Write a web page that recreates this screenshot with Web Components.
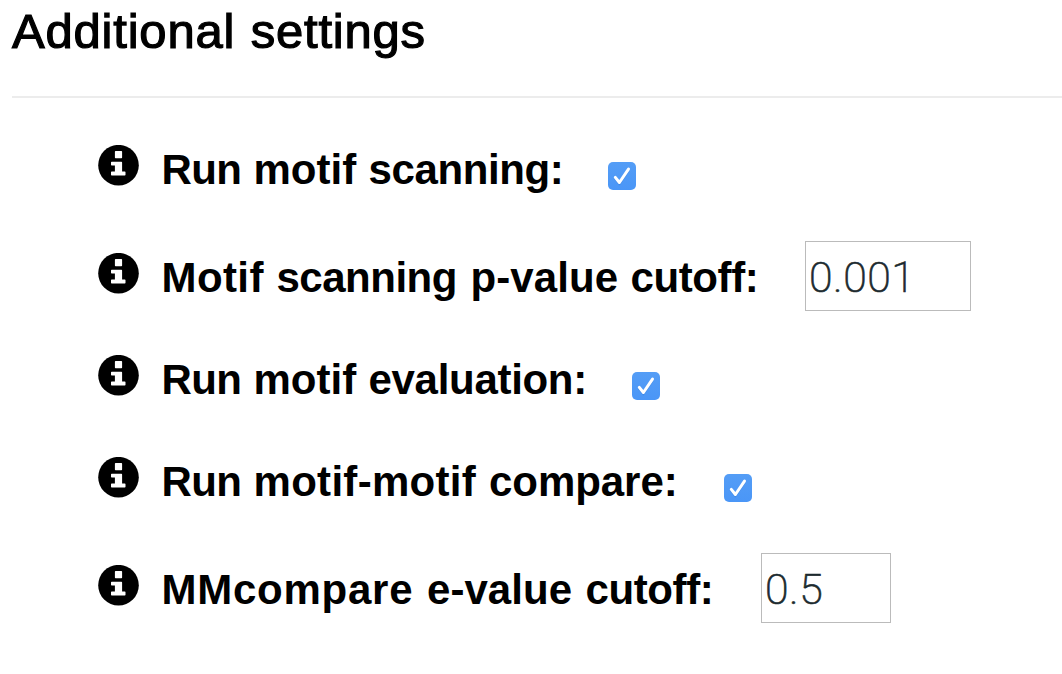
<!DOCTYPE html>
<html lang="en">
<head>
<meta charset="utf-8">
<title>Additional settings</title>
<style>
html,body{margin:0;background:#fff;overflow:hidden}
body{font-family:"Liberation Sans",Arial,sans-serif;color:#000}
</style>
</head>
<body>
<settings-panel heading="Additional settings">
  <setting-row label="Run motif scanning:" widths="92 115 239.5" tracking="-.6 0 -.4"><check-box></check-box></setting-row>
  <setting-row class="field" label="Motif scanning p-value cutoff:" widths="115 194 160 174.5" tracking=".4 -.5 .1 -.4"><value-field value="0.001" style="--w:166px"></value-field></setting-row>
  <setting-row label="Run motif evaluation:" widths="92 115 263.5" tracking="-.6 0 -.3"><check-box></check-box></setting-row>
  <setting-row label="Run motif-motif compare:" widths="92 235.5 235" tracking="-.6 .3 -.05"><check-box></check-box></setting-row>
  <setting-row class="field" label="MMcompare e-value cutoff:" widths="265.5 158.5 175.5" tracking=".75 .05 -.4"><value-field value="0.5" style="--w:130px"></value-field></setting-row>
</settings-panel>
<script>
class SettingsPanel extends HTMLElement{
  connectedCallback(){
    this.attachShadow({mode:'open'}).innerHTML=`<style>
      :host{display:block;height:674px;padding-left:12px;box-sizing:border-box}
      h2{margin:0;height:96px;box-sizing:border-box;padding-top:4px;font-size:49px;line-height:55px;font-weight:400;letter-spacing:.8px;word-spacing:1px;-webkit-text-stroke:1.2px #000;white-space:nowrap}
      .rule{height:2px;background:#ececec}
      .rows{display:flex;flex-direction:column;gap:32px;padding:35px 0 0 86px}
    </style><h2></h2><div class="rule"></div><div class="rows"><slot></slot></div>`;
    this.shadowRoot.querySelector('h2').textContent=this.getAttribute('heading');
  }
}
class InfoIcon extends HTMLElement{
  connectedCallback(){
    this.attachShadow({mode:'open'}).innerHTML=`<style>:host{display:block;width:41px;height:41px}svg{display:block}</style>
    <svg width="41" height="41" viewBox="0 0 41 41"><circle cx="20.5" cy="20.2" r="20.3"/><path fill="#fff" d="M17.6 6h5.8q.7 0 .7.7v5.8q0 .7-.7.7h-5.8q-.7 0-.7-.7V6.700q0-.7.7-.7zM13.700 16.700h9.700q.7 0 .7.7v9.200h2.700q.7 0 .7.7v2.500q0 .7-.7.7H13.700q-.7 0-.7-.7v-2.500q0-.7.7-.7h3.200v-6.100h-3.200q-.7 0-.7-.7v-2.400q0-.7.7-.7z"/></svg>`;
  }
}
class SettingRow extends HTMLElement{
  connectedCallback(){
    this.attachShadow({mode:'open'}).innerHTML=`<style>
      :host{display:flex;height:70px;align-items:flex-start}
      :host(.field:nth-child(2)),:host(.field:last-child){margin-top:6px}
      info-icon{margin-top:12px;flex:none}
      label{display:flex;flex:none;margin-left:22.500px;margin-top:13px;font-size:42px;font-weight:700;line-height:48px;white-space:pre}
      span{flex:none}
    </style><info-icon></info-icon><label></label><slot></slot>`;
    const label=this.shadowRoot.querySelector('label');
    const widths=this.getAttribute('widths').split(' ');
    const tracking=this.getAttribute('tracking').split(' ');
    const words=this.getAttribute('label').split(' ');
    words.forEach((word,i)=>{
      const s=document.createElement('span');
      s.textContent=word+(i<words.length-1?' ':'');
      s.style.width=widths[i]+'px';
      s.style.letterSpacing=tracking[i]+'px';
      label.append(s);
    });
  }
}
class CheckBox extends HTMLElement{
  connectedCallback(){
    this.attachShadow({mode:'open'}).innerHTML=`<style>:host{display:block;margin-top:29px}svg{display:block}</style>
    <svg width="28" height="28" viewBox="0 0 28 28"><defs><linearGradient id="g" x2="0" y2="1"><stop stop-color="#549df6"/><stop offset="1" stop-color="#4a96f7"/></linearGradient></defs><rect width="28" height="28" rx="5" fill="url(#g)"/><path d="M7.300 16.200l4.100 5.100L20.500 7.900" fill="none" stroke="#2f72c8" stroke-opacity=".35" stroke-width="3" stroke-linecap="round"/><path d="M7.300 15.400l4.100 5.100L20.500 7.100" fill="none" stroke="#fff" stroke-width="3" stroke-linecap="round" stroke-linejoin="round"/></svg>`;
  }
}
class ValueField extends HTMLElement{
  connectedCallback(){
    this.attachShadow({mode:'open'}).innerHTML=`<style>
      :host{display:block;box-sizing:border-box;width:var(--w);height:70px;border:1px solid #bbb;padding:12px 0 0 3px;font:200 42px/48px Roboto,sans-serif;letter-spacing:.5px;color:#1c2a2e;-webkit-text-stroke:.6px #1c2a2e}
      span{display:block;transform:scaleX(1.02);transform-origin:0 0}
    </style><span></span>`;
    this.shadowRoot.querySelector('span').textContent=this.getAttribute('value');
  }
}
customElements.define('settings-panel',SettingsPanel);
customElements.define('info-icon',InfoIcon);
customElements.define('setting-row',SettingRow);
customElements.define('check-box',CheckBox);
customElements.define('value-field',ValueField);
</script>
</body>
</html>
